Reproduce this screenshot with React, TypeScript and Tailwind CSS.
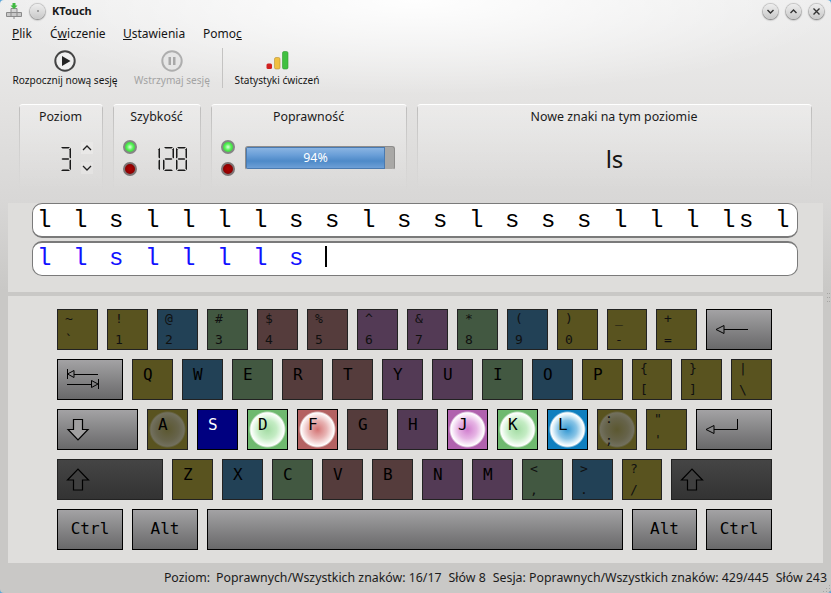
import React from 'react';

type KeyDef = {
  w?: number;
  top?: string;
  bottom?: string;
  label?: string;
  color?: string;
  glow?: string;
  textClass?: string;
  icon?: React.ReactNode;
  gray?: boolean;
  dark?: boolean;
};

const OLIVE = 'bg-[#59531f]';
const BLUE = 'bg-[#224156]';
const GREEN = 'bg-[#425841]';
const BROWN = 'bg-[#553c3c]';
const PURPLE = 'bg-[#533a55]';

const GLOW_GREEN = 'bg-[radial-gradient(circle_18.5px_at_center,#a4dca4_0%,#c4ecc4_50%,#f0fcf0_80%,#ffffff_90%,transparent_100%)]';
const GLOW_OFF = 'bg-[radial-gradient(circle_18.5px_at_center,#5c5830_0%,#66634a_60%,#72705e_90%,transparent_100%)]';

// Strzałki na klawiszach specjalnych
const BackspaceIcon = () => (
  <svg width="64" height="39" className="block" fill="none" stroke="#000">
    <path d="M9 19.5 L17 15.5 V23.5 Z M17 19.5 H41" />
  </svg>
);
const TabIcon = () => (
  <svg width="64" height="39" className="block" fill="none" stroke="#000">
    <path d="M9.5 9 V19 M9.5 14 L16 10.5 V17.5 Z M16 14.5 H40" />
    <path d="M40.5 19 V29 M40 24 L33.5 20.5 V27.5 Z M33.5 24.5 H9" />
  </svg>
);
const CapsIcon = () => (
  <svg width="79" height="39" className="block" fill="#a09fa0" stroke="#000" strokeWidth="1.2">
    <path d="M15.5 9.5 H24.5 V19.5 H30 L20 30 L10 19.5 H15.5 Z" />
  </svg>
);
const ShiftIcon = () => (
  <svg width="40" height="39" className="block" fill="#3f3f3f" stroke="#000" strokeWidth="1.2">
    <path d="M15.5 30 H24.5 V20 H30.5 L20 9 L9.5 20 H15.5 Z" />
  </svg>
);
const EnterIcon = () => (
  <svg width="74" height="39" className="block" fill="none" stroke="#000">
    <path d="M9 19.5 L17 15.5 V23.5 Z M17 19.5 H40.5 V9" strokeWidth="1" />
  </svg>
);

const rows: KeyDef[][] = [
  [
    { top: '~', bottom: '`', color: OLIVE },
    { top: '!', bottom: '1', color: OLIVE },
    { top: '@', bottom: '2', color: BLUE },
    { top: '#', bottom: '3', color: GREEN },
    { top: '$', bottom: '4', color: BROWN },
    { top: '%', bottom: '5', color: BROWN },
    { top: '^', bottom: '6', color: PURPLE },
    { top: '&', bottom: '7', color: PURPLE },
    { top: '*', bottom: '8', color: GREEN },
    { top: '(', bottom: '9', color: BLUE },
    { top: ')', bottom: '0', color: OLIVE },
    { w: 40, top: '_', bottom: '-', color: OLIVE },
    { top: '+', bottom: '=', color: OLIVE },
    { w: 66, gray: true, icon: <BackspaceIcon /> },
  ],
  [
    { w: 66, gray: true, icon: <TabIcon /> },
    { label: 'Q', color: OLIVE },
    { label: 'W', color: BLUE },
    { label: 'E', color: GREEN },
    { label: 'R', color: BROWN },
    { label: 'T', color: BROWN },
    { label: 'Y', color: PURPLE },
    { label: 'U', color: PURPLE },
    { label: 'I', color: GREEN },
    { label: 'O', color: BLUE },
    { label: 'P', color: OLIVE },
    { w: 40, top: '{', bottom: '[', color: OLIVE },
    { top: '}', bottom: ']', color: OLIVE },
    { top: '|', bottom: '\\', color: OLIVE },
  ],
  [
    { w: 81, gray: true, icon: <CapsIcon /> },
    { label: 'A', color: OLIVE, glow: GLOW_OFF },
    { label: 'S', color: 'bg-[#000080] border-black', textClass: 'text-white' },
    { label: 'D', color: 'bg-[#6fb96f] border-black', glow: GLOW_GREEN },
    {
      label: 'F',
      color: 'bg-[#b46262] border-black',
      glow: 'bg-[radial-gradient(circle_18.5px_at_center,#d47474_0%,#e8b4b4_50%,#faeaea_80%,#ffffff_90%,transparent_100%)]',
    },
    { label: 'G', color: BROWN },
    { label: 'H', color: PURPLE },
    {
      label: 'J',
      color: 'bg-[#b062ae] border-black',
      glow: 'bg-[radial-gradient(circle_18.5px_at_center,#d07ece_0%,#e6b4e4_50%,#f9ecf9_80%,#ffffff_90%,transparent_100%)]',
    },
    { label: 'K', color: 'bg-[#6fb96f] border-black', glow: GLOW_GREEN },
    {
      label: 'L',
      color: 'bg-[#0f7fbf] border-black',
      glow: 'bg-[radial-gradient(circle_18.5px_at_center,#3498d2_0%,#88c4e6_50%,#e6f4fb_80%,#ffffff_90%,transparent_100%)]',
    },
    { w: 40, top: ':', bottom: ';', color: OLIVE, glow: GLOW_OFF },
    { top: '"', bottom: "'", color: OLIVE },
    { w: 76, gray: true, icon: <EnterIcon /> },
  ],
  [
    { w: 106, dark: true, icon: <ShiftIcon /> },
    { label: 'Z', color: OLIVE },
    { label: 'X', color: BLUE },
    { label: 'C', color: GREEN },
    { label: 'V', color: BROWN },
    { label: 'B', color: BROWN },
    { label: 'N', color: PURPLE },
    { label: 'M', color: PURPLE },
    { top: '<', bottom: ',', color: GREEN },
    { top: '>', bottom: '.', color: BLUE },
    { w: 40, top: '?', bottom: '/', color: OLIVE },
    { w: 101, dark: true, icon: <ShiftIcon /> },
  ],
];

const WideKey = ({ w, text }: { w: number; text?: string }) => (
  <div
    style={{ width: w }}
    className="h-[41px] pb-[2px] border border-black bg-gradient-to-b from-[#a3a2a4] to-[#69696a] flex items-center justify-center text-[16px] text-black"
  >
    {text}
  </div>
);

const Key = ({ def }: { def: KeyDef }) => {
  const width = def.w ?? 41;
  if (def.gray || def.dark) {
    return (
      <div
        style={{ width }}
        className={
          def.gray
            ? 'h-[41px] border border-black bg-gradient-to-b from-[#a3a2a4] to-[#69696a]'
            : 'h-[41px] border border-[#222] bg-gradient-to-b from-[#454545] to-[#333333]'
        }
      >
        {def.icon}
      </div>
    );
  }
  const color = def.color?.includes('border-black') ? def.color : `${def.color} border-[#222]`;
  return (
    <div style={{ width }} className={`h-[41px] border ${color}`}>
      {def.label ? (
        <div className={`w-full h-full pl-[10px] pt-[4px] text-[16px] leading-[22px] text-black ${def.textClass ?? ''} ${def.glow ?? ''}`}>
          {def.label}
        </div>
      ) : (
        <div className={`w-full h-full pl-[7px] flex flex-col justify-between text-[13px] leading-[18px] text-[#101010] ${def.glow ?? ''}`}>
          <span>{def.top}</span>
          <span>{def.bottom}</span>
        </div>
      )}
    </div>
  );
};

const Led = ({ on }: { on: 'green' | 'red' }) => (
  <div
    className={
      on === 'green'
        ? 'w-[14px] h-[14px] rounded-full border-2 border-[#858585] bg-[radial-gradient(circle_at_center,#e0ffe0_0%,#55f055_45%,#2fbf2f_100%)]'
        : 'w-[14px] h-[14px] rounded-full border-2 border-[#7d7575] bg-[radial-gradient(circle_at_center,#b00000_0%,#900000_60%,#6a0000_100%)]'
    }
  />
);

const SEGMENTS: Record<string, string> = {
  a: '1,0 10,0 8.5,1.5 2.5,1.5',
  b: '11,0.7 11,11.4 9.5,10.4 9.5,2.2',
  c: '11,12.6 11,23.3 9.5,21.8 9.5,13.6',
  d: '1,24 10,24 8.5,22.5 2.5,22.5',
  e: '0,12.6 0,23.3 1.5,21.8 1.5,13.6',
  f: '0,0.7 0,11.4 1.5,10.4 1.5,2.2',
  g: '1.5,12 2.5,11.2 8.5,11.2 9.5,12 8.5,12.8 2.5,12.8',
};
const DIGITS: Record<string, string> = { '1': 'bc', '2': 'abged', '3': 'abgcd', '8': 'abcdefg' };

// Wyświetlacz LCD z siedmiu segmentów
const LcdDigit = ({ d }: { d: string }) => (
  <svg width="11" height="24" viewBox="0 0 11 24" className="block" fill="#1a1a1a">
    {DIGITS[d].split('').map(s => (
      <polygon key={s} points={SEGMENTS[s]} />
    ))}
  </svg>
);

const Panel = ({ w, title, children }: { w: number; title: string; children?: React.ReactNode }) => (
  <div
    style={{ width: w }}
    className="h-[86px] rounded-t-[4px] border-t border-t-white [background:linear-gradient(to_bottom,#bdbcbb,transparent)_left/1px_100%_no-repeat,linear-gradient(to_bottom,#bdbcbb,transparent)_right/1px_100%_no-repeat,linear-gradient(to_bottom,rgba(255,255,255,0.3),rgba(255,255,255,0))]"
  >
    <div className="h-[24px] pt-[3px] pr-[1px] text-center text-[12.4px] leading-[18px] text-[#1b1b1b]">{title}</div>
    {children}
  </div>
);

const WinButton = ({ children }: { children: React.ReactNode }) => (
  <div className="w-[15px] h-[15px] rounded-full bg-gradient-to-b from-[#eeeeee] to-[#c8c8c8] shadow-[0_0_1px_1px_rgba(0,0,0,0.18),0_1px_2px_rgba(0,0,0,0.4)] flex items-center justify-center">
    <svg width="9" height="9" viewBox="0 0 9 9" fill="none" stroke="#333" strokeWidth="1.4">
      {children}
    </svg>
  </div>
);

const ToolButton = ({ w, text, disabled, children }: { w: number; text: string; disabled?: boolean; children: React.ReactNode }) => (
  <div style={{ width: w }} className="flex flex-col items-center">
    <div className="h-[28px] pt-[3px] flex items-center justify-center">{children}</div>
    <div className={`text-[10.1px] leading-[14px] whitespace-nowrap ${disabled ? 'text-[#a3a3a3]' : 'text-[#151515]'}`}>{text}</div>
  </div>
);

export default function App() {
  return (
    <div className="w-[831px] h-[593px] bg-[#5aa5d8] overflow-hidden font-['Noto_Sans',sans-serif]">
      <div className="relative w-full h-full flex flex-col rounded-[4px] overflow-hidden [background:radial-gradient(ellipse_430px_95px_at_50%_0,rgba(255,255,255,0.95),rgba(255,255,255,0)),linear-gradient(to_bottom,#eeeeee_0,#e4e3e2_100px,#d8d7d6_200px,#c9c8c6_290px)]">
        {/* Pasek tytułu */}
        <div className="h-[22px] shrink-0 flex items-center pl-[6px] pr-[7px]">
          <svg width="16" height="18" viewBox="0 0 16 18" className="block">
            <path d="M5 6.5 H11 V10.5 H5 Z" fill="#d4d4d4" stroke="#8a8a8a" />
            <path d="M0.5 10.5 H15.5 V14.5 H0.5 Z" fill="#c8c8c8" stroke="#8a8a8a" />
            <path d="M5 10.5 V14.5 M11 10.5 V14.5 M8 14.5 V17" stroke="#8a8a8a" />
            <path d="M6.5 1 H9.5 V3.5 H11.5 L8 7 L4.5 3.5 H6.5 Z" fill="#3fb83f" />
          </svg>
          <div className="ml-[8px] w-[15px] h-[15px] rounded-full bg-gradient-to-b from-[#eeeeee] to-[#c8c8c8] shadow-[0_0_1px_1px_rgba(0,0,0,0.18),0_1px_2px_rgba(0,0,0,0.35)] flex items-center justify-center">
            <div className="w-[2px] h-[2px] rounded-full bg-[#888]" />
          </div>
          <span className="ml-[7px] text-[11px] font-bold text-[#1a1a1a]">KTouch</span>
          <div className="ml-auto flex gap-[8px]">
            <WinButton>
              <path d="M1.5 3 L4.5 6 L7.5 3" />
            </WinButton>
            <WinButton>
              <path d="M1.5 6 L4.5 3 L7.5 6" />
            </WinButton>
            <WinButton>
              <path d="M1.5 1.5 L7.5 7.5 M7.5 1.5 L1.5 7.5" />
            </WinButton>
          </div>
        </div>

        {/* Menu */}
        <div className="h-[23px] shrink-0 flex items-center pl-[12px] text-[12px] text-[#151515]">
          <span className="w-[38px]"><span className="underline">P</span>lik</span>
          <span className="w-[73px]">Ć<span className="underline">w</span>iczenie</span>
          <span className="w-[80px]"><span className="underline">U</span>stawienia</span>
          <span>Pomo<span className="underline">c</span></span>
        </div>

        {/* Pasek narzędzi */}
        <div className="h-[59px] shrink-0 flex items-start pl-[12px]">
          <ToolButton w={106} text="Rozpocznij nową sesję">
            <svg width="22" height="22" viewBox="0 0 22 22" className="block">
              <circle cx="11" cy="11" r="9.7" fill="#efefef" stroke="#444" strokeWidth="2" />
              <path d="M8 6 L16.5 11 L8 16 Z" fill="#222" />
            </svg>
          </ToolButton>
          <div className="ml-[15px]">
            <ToolButton w={78} text="Wstrzymaj sesję" disabled>
              <svg width="22" height="22" viewBox="0 0 22 22" className="block">
                <circle cx="11" cy="11" r="9.7" fill="#e6e6e6" stroke="#aeaeae" strokeWidth="2" />
                <path d="M7.5 7 H10 V15 H7.5 Z M12 7 H14.5 V15 H12 Z" fill="#a8a8a8" />
              </svg>
            </ToolButton>
          </div>
          <div className="ml-[11px] mt-[3px] w-[1px] h-[40px] bg-[#c4c3c2]" />
          <div className="ml-[10px]">
            <ToolButton w={88} text="Statystyki ćwiczeń">
              <svg width="23" height="20" viewBox="0 0 23 20" className="block">
                <rect x="0.5" y="12.5" width="5.5" height="5.5" rx="1.5" fill="#d02020" />
                <rect x="8.5" y="6.5" width="5.5" height="11.5" rx="1.5" fill="#f0c040" stroke="#b89030" strokeWidth="0.6" />
                <rect x="16.5" y="0.5" width="5.5" height="17.5" rx="1.5" fill="#40c040" stroke="#2f9a2f" strokeWidth="0.6" />
              </svg>
            </ToolButton>
          </div>
        </div>

        {/* Panele informacyjne */}
        <div className="h-[99px] shrink-0 flex items-start gap-[10px] pl-[19px]">
          <Panel w={84} title="Poziom">
            <div className="flex pl-[41px] pt-[18px]">
              <LcdDigit d="3" />
              <div className="ml-[10px] -mt-[5px] flex flex-col gap-[8px]">
                <div className="w-[12px] h-[12px] bg-[#e9e8e7] flex items-center justify-center">
                  <svg width="10" height="6" viewBox="0 0 10 6" fill="none" stroke="#222" strokeWidth="1.3">
                    <path d="M1 5 L5 1 L9 5" />
                  </svg>
                </div>
                <div className="w-[12px] h-[12px] bg-[#e4e3e2] flex items-center justify-center">
                  <svg width="10" height="6" viewBox="0 0 10 6" fill="none" stroke="#222" strokeWidth="1.3">
                    <path d="M1 1 L5 5 L9 1" />
                  </svg>
                </div>
              </div>
            </div>
          </Panel>
          <Panel w={88} title="Szybkość">
            <div className="flex pl-[10px] pt-[11px]">
              <div className="flex flex-col gap-[8px]">
                <Led on="green" />
                <Led on="red" />
              </div>
              <div className="ml-[12px] mt-[7px] flex gap-[2.5px]">
                <LcdDigit d="1" />
                <LcdDigit d="2" />
                <LcdDigit d="8" />
              </div>
            </div>
          </Panel>
          <Panel w={196} title="Poprawność">
            <div className="flex pl-[10px] pt-[11px]">
              <div className="flex flex-col gap-[8px]">
                <Led on="green" />
                <Led on="red" />
              </div>
              <div className="ml-[10px] mt-[6px] w-[150px] h-[24px] rounded-[3px] bg-[#a9a8a6] border border-[#8e8d8c] border-b-[#dedddc] flex overflow-hidden">
                <div className="w-[139px] h-full bg-[linear-gradient(to_bottom,#8ab4e2_0%,#6a9fd8_35%,#4e8ac8_65%,#6d9fd6_100%)] border border-[#4a7ab0] flex items-center justify-center text-[12.4px] text-white">
                  94%
                </div>
              </div>
            </div>
          </Panel>
          <Panel w={395} title="Nowe znaki na tym poziomie">
            <div className="text-center text-[24px] leading-[32px] pt-[14px] text-[#151515]">ls</div>
          </Panel>
        </div>

        {/* Linie tekstu */}
        <div className="h-[89px] shrink-0 mx-[8px] bg-[#dedddb] pl-[24px] font-['Liberation_Mono',monospace] text-[24px] leading-[30px] tracking-[3.6px]">
          <div className="w-[766px] h-[35px] rounded-[10px] bg-white border border-[#7a7a7a] border-b-2 pl-[4px] pt-[2px] whitespace-pre text-black">
            {'l l s l l l l s s l s s l s s s l l l ls l'}
          </div>
          <div className="mt-[3px] w-[766px] h-[35px] rounded-[10px] bg-white border border-[#7a7a7a] border-t-2 pl-[4px] pt-[1px] whitespace-pre text-[#1212ff] flex items-start">
            <span>{'l l s l l l l s '}</span>
            <div className="mt-[2px] w-[2px] h-[21px] bg-black" />
          </div>
        </div>

        {/* Rozdzielacz */}
        <div className="h-[4px] shrink-0" />

        {/* Klawiatura */}
        <div className="h-[267px] shrink-0 mx-[8px] bg-[#dfdedc] pl-[49px] pt-[13px] flex flex-col gap-[9px] font-['DejaVu_Sans_Mono',monospace]">
          {rows.map((row, i) => (
            <div key={i} className="flex gap-[9px]">
              {row.map((def, j) => (
                <Key key={j} def={def} />
              ))}
            </div>
          ))}
          <div className="flex gap-[9px]">
            <WideKey w={66} text="Ctrl" />
            <WideKey w={66} text="Alt" />
            <WideKey w={416} />
            <WideKey w={65} text="Alt" />
            <WideKey w={66} text="Ctrl" />
          </div>
        </div>

        {/* Pasek stanu */}
        <div className="h-[30px] shrink-0 flex items-center justify-end pr-[4px] text-[12.35px] text-[#1b1b1b] whitespace-nowrap">
          <span>Poziom:</span>
          <span className="ml-[6px]">Poprawnych/Wszystkich znaków: 16/17</span>
          <span className="ml-[7px]">Słów 8</span>
          <span className="ml-[7px]">Sesja: Poprawnych/Wszystkich znaków: 429/445</span>
          <span className="ml-[7px]">Słów 243</span>
        </div>

        {/* Uchwyty: rozdzielacz i zmiana rozmiaru okna */}
        <svg width="3" height="9" className="absolute left-[827px] top-[293px]" fill="#a5a4a2">
          <rect x="0" y="0" width="1" height="1" />
          <rect x="2" y="0" width="1" height="1" />
          <rect x="0" y="4" width="1" height="1" />
          <rect x="2" y="4" width="1" height="1" />
          <rect x="0" y="8" width="1" height="1" />
          <rect x="2" y="8" width="1" height="1" />
        </svg>
        <svg width="8" height="8" className="absolute right-0 bottom-0" fill="#a5a4a2">
          <rect x="6" y="0" width="1" height="1" />
          <rect x="3" y="3" width="1" height="1" />
          <rect x="6" y="3" width="1" height="1" />
          <rect x="0" y="6" width="1" height="1" />
          <rect x="3" y="6" width="1" height="1" />
          <rect x="6" y="6" width="1" height="1" />
        </svg>
      </div>
    </div>
  );
}
